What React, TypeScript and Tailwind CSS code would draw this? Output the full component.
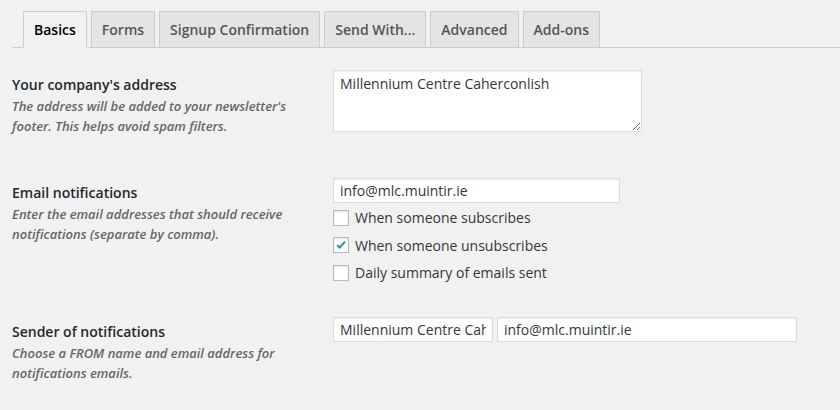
import React from 'react';

const TABS = ['Basics', 'Forms', 'Signup Confirmation', 'Send With...', 'Advanced', 'Add-ons'];

const font = { fontFamily: '"Open Sans", "Noto Sans", sans-serif' };

const inputCls =
  'block h-[25px] border border-[#ddd] bg-white px-[6px] text-[14px] text-[#32373c] shadow-[inset_0_1px_2px_rgba(0,0,0,0.07)] outline-none';

function Checkbox({ checked, label }: { checked?: boolean; label: string }) {
  return (
    <label className="flex h-[27.5px] items-center gap-[6px] text-[14px] text-[#32373c]">
      <span className="flex h-[16px] w-[16px] items-center justify-center border border-[#b4b9be] bg-white shadow-[inset_0_1px_2px_rgba(0,0,0,0.1)]">
        {checked && (
          <svg viewBox="0 0 16 16" className="h-[14px] w-[14px]">
            <path d="M3.5 8.2 L6.4 11 L12.6 4.2" fill="none" stroke="#1e8cbe" strokeWidth="2.2" />
          </svg>
        )}
      </span>
      {label}
    </label>
  );
}

function Field({ title, desc, children }: { title: string; desc: string; children: React.ReactNode }) {
  return (
    <div className="flex">
      <div className="w-[321px] shrink-0 pt-[5px]">
        <div className="text-[14px] font-semibold leading-[20px] text-[#23282d]">{title}</div>
        <div className="mt-[1px] pr-8 text-[13px] font-semibold italic leading-[20px] text-[#666]">{desc}</div>
      </div>
      <div className="flex-1">{children}</div>
    </div>
  );
}

export default function App() {
  return (
    <div className="h-[410px] w-[840px] overflow-hidden bg-[#f1f1f1]" style={font}>
      <div className="ml-[12px] flex gap-[4px] border-b border-[#ccc] pl-[11px] pt-[11px]">
        {TABS.map((t, i) => (
          <div
            key={t}
            className={`-mb-px flex h-[37px] items-center border px-[10px] text-[14px] font-semibold ${
              i === 0
                ? 'border-[#ccc] border-b-[#f1f1f1] bg-[#f1f1f1] text-[#000]'
                : 'border-[#ccc] bg-[#e4e4e4] text-[#555]'
            }`}
          >
            {t}
          </div>
        ))}
      </div>

      <div className="pl-[12px]">
        <div className="mt-[22px]">
          <Field
            title="Your company's address"
            desc="The address will be added to your newsletter's footer. This helps avoid spam filters."
          >
            <textarea
              defaultValue="Millennium Centre Caherconlish"
              className="block h-[62px] w-[309px] resize-y border border-[#ddd] bg-white px-[6px] py-[2px] text-[14px] leading-[22px] text-[#32373c] shadow-[inset_0_1px_2px_rgba(0,0,0,0.07)] outline-none"
            />
          </Field>
        </div>

        <div className="mt-[42px]">
          <Field
            title="Email notifications"
            desc="Enter the email addresses that should receive notifications (separate by comma)."
          >
            <input defaultValue="info@mlc.muintir.ie" className={`${inputCls} w-[287px]`} />
            <div className="mt-[1px]">
              <Checkbox label="When someone subscribes" />
              <Checkbox checked label="When someone unsubscribes" />
              <Checkbox label="Daily summary of emails sent" />
            </div>
          </Field>
        </div>

        <div className="mt-[30px]">
          <Field
            title="Sender of notifications"
            desc="Choose a FROM name and email address for notifications emails."
          >
            <div className="flex gap-[4px]">
              <input defaultValue="Millennium Centre Caherconlish" className={`${inputCls} w-[160px]`} />
              <input defaultValue="info@mlc.muintir.ie" className={`${inputCls} w-[300px]`} />
            </div>
          </Field>
        </div>
      </div>
    </div>
  );
}
